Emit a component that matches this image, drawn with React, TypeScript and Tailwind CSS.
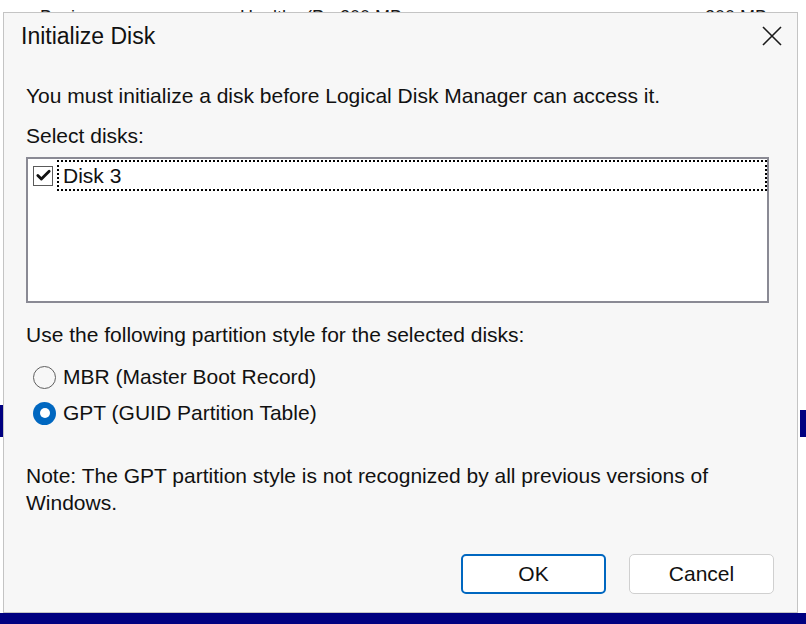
import { Check } from "lucide-react";

const font = { fontFamily: '"Liberation Sans", Arial, sans-serif' };

const Radio = ({ checked, label }: { checked?: boolean; label: string }) => (
  <label className="flex h-[30px] items-center gap-[7px] pl-[7px]">
    {checked ? (
      <span className="flex h-[23px] w-[23px] items-center justify-center rounded-full bg-[#0067c0]">
        <span className="h-[10px] w-[10px] rounded-full bg-white" />
      </span>
    ) : (
      <span className="h-[23px] w-[23px] rounded-full border-[1.5px] border-[#5f5f5f] bg-[#f7f7f7]" />
    )}
    <span>{label}</span>
  </label>
);

export default function App() {
  return (
    <div
      className="relative h-[624px] w-[806px] overflow-hidden bg-white text-[21px] text-[#111]"
      style={font}
    >
      {/* disk management window behind the dialog */}
      <div className="flex h-[12px] items-end overflow-hidden text-[18px] leading-[18px] text-[#1a1a1a]">
        <div className="-mb-[14px] flex">
          <span className="ml-[40px] w-[200px]">Basic</span>
          <span className="w-[100px]">Healthy (P</span>
          <span className="w-[365px]">200 MB</span>
          <span>200 MB</span>
        </div>
      </div>
      <div className="absolute bottom-0 left-0 h-[11px] w-full bg-[#000080]" />
      <div className="absolute left-0 top-[405px] h-[32px] w-[3px] bg-[#000080]" />
      <div className="absolute right-0 top-[410px] h-[27px] w-[6px] bg-[#000080]" />

      {/* dialog */}
      <div className="absolute left-[3px] top-[12px] flex h-[601px] w-[795px] flex-col border border-[#c4c4c4] bg-[#f7f7f7]">
        <div className="flex h-[46px] shrink-0 items-center justify-between pl-[17px] pr-[15px]">
          <span className="text-[23px]">Initialize Disk</span>
          <svg width="20" height="20" viewBox="0 0 20 20" className="text-[#1a1a1a]">
            <path d="M1 1 L19 19 M19 1 L1 19" stroke="currentColor" strokeWidth="1.6" />
          </svg>
        </div>

        <div className="flex flex-1 flex-col pl-[22px] pr-[23px]">
          <div className="mt-[24px] h-[26px] leading-[26px]">
            You must initialize a disk before Logical Disk Manager can access it.
          </div>
          <div className="mt-[14px] h-[26px] leading-[26px]">Select disks:</div>

          <div className="mt-[8px] h-[146px] w-[743px] border-2 border-[#8a8a94] bg-white pl-[5px] pt-[1px]">
            <div className="flex items-center gap-[4px]">
              <span className="flex h-[20px] w-[20px] items-center justify-center border border-[#5a5a5a] bg-white">
                <Check className="h-[17px] w-[17px]" strokeWidth={4} />
              </span>
              <div className="flex h-[31px] flex-1 items-center border-2 border-dotted border-black pl-[4px]">
                Disk 3
              </div>
            </div>
          </div>

          <div className="mt-[19px] h-[26px] leading-[26px]">
            Use the following partition style for the selected disks:
          </div>
          <div className="mt-[14px]">
            <Radio label="MBR (Master Boot Record)" />
          </div>
          <div className="mt-[6px]">
            <Radio checked label="GPT (GUID Partition Table)" />
          </div>

          <div className="mt-[34px] leading-[27px]">
            Note: The GPT partition style is not recognized by all previous versions of
            <br />
            Windows.
          </div>

          <div className="mt-[38px] flex justify-end gap-[23px]">
            <button className="h-[40px] w-[145px] rounded-[5px] border-2 border-[#0067c0] bg-white">
              OK
            </button>
            <button className="h-[40px] w-[145px] rounded-[5px] border border-[#d0d0d0] bg-white">
              Cancel
            </button>
          </div>
        </div>
      </div>
    </div>
  );
}
